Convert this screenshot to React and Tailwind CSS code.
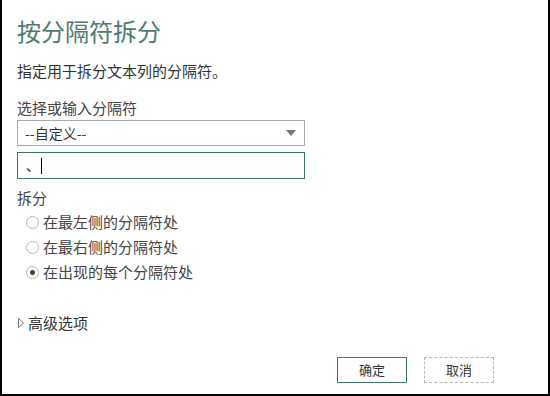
import React, { useState } from 'react'

const font = { fontFamily: '"Noto Sans CJK SC", "Microsoft YaHei", sans-serif' }

const Radio = ({ checked, label, onClick }) => (
  <div className="flex items-center h-[25px] cursor-pointer" onClick={onClick}>
    <span className="w-[13px] h-[13px] rounded-full border border-[#b5b5b5] bg-white flex items-center justify-center ml-[9px]">
      {checked && <span className="w-[5px] h-[5px] rounded-full bg-[#444]" />}
    </span>
    <span className="ml-[4px] text-[15px] text-[#444]">{label}</span>
  </div>
)

const App = () => {
  const [mode, setMode] = useState(2)
  const options = ['在最左侧的分隔符处', '在最右侧的分隔符处', '在出现的每个分隔符处']

  return (
    <div lang="zh-CN" className="w-[550px] h-[396px] bg-black pl-[2px] pr-[2px] pb-[2px]" style={font}>
      <div className="w-full h-full bg-white flex flex-col pl-[15px]">
        <h1 className="mt-[15px] text-[24px] leading-[32px] text-[#4e7a6f] font-normal">按分隔符拆分</h1>

        <p className="mt-[14px] text-[15px] leading-5 text-[#333]">指定用于拆分文本列的分隔符。</p>

        <label className="mt-[17px] text-[15px] leading-5 text-[#444]">选择或输入分隔符</label>
        <div className="mt-[2px] w-[288px] h-[26px] border border-[#ababab] flex items-center justify-between px-[7px]">
          <span className="text-[14px] text-[#333]">--自定义--</span>
          <svg width="10" height="6" viewBox="0 0 10 6" className="mr-[1px]">
            <path d="M0 0 L10 0 L5 6 Z" fill="#777" />
          </svg>
        </div>

        <div className="mt-[6px] w-[288px] h-[27px] border border-[#3b7763] flex items-center px-[8px]">
          <span className="text-[14px] text-[#333]">、</span>
          <span className="ml-[1px] w-px h-[16px] bg-black" />
        </div>

        <label className="mt-[9px] text-[15px] leading-5 text-[#444]">拆分</label>
        <div className="mt-[2px] flex flex-col">
          {options.map((o, i) => (
            <Radio key={o} label={o} checked={mode === i} onClick={() => setMode(i)} />
          ))}
        </div>

        <div className="mt-[27px] flex items-center">
          <svg width="6" height="10" viewBox="0 0 6 10" className="ml-[1px]">
            <path d="M0.5 0.5 L5.5 5 L0.5 9.5 Z" fill="none" stroke="#777" strokeWidth="1" />
          </svg>
          <span className="ml-[4px] text-[15px] text-[#333]">高级选项</span>
        </div>

        <div className="mt-auto mb-[11px] flex justify-end gap-[17px] pr-[54px]">
          <button className="w-[70px] h-[26px] border border-[#3b7763] bg-white text-[13px] text-[#333]">确定</button>
          <button className="w-[70px] h-[26px] border border-dashed border-[#b8b8b8] bg-white text-[13px] text-[#333]">取消</button>
        </div>
      </div>
    </div>
  )
}

export default App
